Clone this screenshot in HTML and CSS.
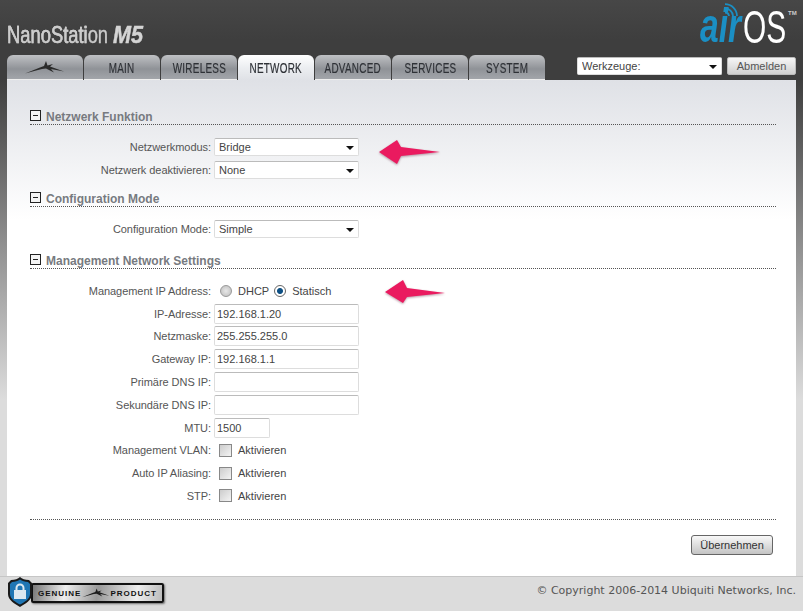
FILE: index.html
```html
<!DOCTYPE html>
<html lang="de">
<head>
<meta charset="utf-8">
<title>NanoStation M5</title>
<link rel="stylesheet" href="styles.css">
</head>
<body>
<div class="page">
  <header class="top">
    <div class="product"><span class="product-name">NanoStation</span><span class="product-model">M5</span></div>
    <div class="logo">
      <svg class="wifi" width="14" height="14" viewBox="0 0 14 14"><g fill="none" stroke="#1b8fc4" stroke-width="1.800"><path d="M1 1.200A12 12 0 0 1 13 13"/><path d="M1 5.500A8 8 0 0 1 9 13"/><path d="M1 9.500A4 4 0 0 1 5 13"/></g></svg>
      <span class="logo-air">air</span><span class="logo-os">OS</span><span class="logo-tm">TM</span>
    </div>
  </header>
  <div class="navbar">
    <nav class="tabs">
      <a class="tab tab-logo"><svg width="40" height="13" viewBox="0 0 40 13"><path fill="#2b2b2b" d="M0 12.500 L15 6.500 L19 5 L21 0 L22.500 4.500 L28 3 L25 5.500 L39 10.500 L26 8 L29 11.500 L21 7.500 L17 8 L13 9 Z"/></svg></a>
      <a class="tab"><span>MAIN</span></a>
      <a class="tab"><span>WIRELESS</span></a>
      <a class="tab tab-active"><span>NETWORK</span></a>
      <a class="tab"><span>ADVANCED</span></a>
      <a class="tab"><span>SERVICES</span></a>
      <a class="tab"><span>SYSTEM</span></a>
    </nav>
    <div class="tools">
      <div class="select"><select><option>Werkzeuge:</option></select></div>
      <button class="btn btn-logout" type="button">Abmelden</button>
    </div>
  </div>
  <main class="content">
    <section class="group group-first">
      <h2 class="group-title"><span class="toggle"></span>Netzwerk Funktion</h2>
      <div class="row"><label class="lbl">Netzwerkmodus:</label><div class="select"><select><option>Bridge</option></select></div></div>
      <div class="row"><label class="lbl">Netzwerk deaktivieren:</label><div class="select"><select><option>None</option></select></div></div>
    </section>
    <section class="group">
      <h2 class="group-title"><span class="toggle"></span>Configuration Mode</h2>
      <div class="row"><label class="lbl">Configuration Mode:</label><div class="select"><select><option>Simple</option></select></div></div>
    </section>
    <section class="group group-last">
      <h2 class="group-title"><span class="toggle"></span>Management Network Settings</h2>
      <div class="row row-radio"><label class="lbl">Management IP Address:</label>
        <label class="opt"><input type="radio" name="ip">DHCP</label>
        <label class="opt"><input type="radio" name="ip" checked>Statisch</label>
      </div>
      <div class="row"><label class="lbl">IP-Adresse:</label><input class="text" type="text" value="192.168.1.20"></div>
      <div class="row"><label class="lbl">Netzmaske:</label><input class="text" type="text" value="255.255.255.0"></div>
      <div class="row"><label class="lbl">Gateway IP:</label><input class="text" type="text" value="192.168.1.1"></div>
      <div class="row"><label class="lbl">Primäre DNS IP:</label><input class="text" type="text"></div>
      <div class="row"><label class="lbl">Sekundäre DNS IP:</label><input class="text" type="text"></div>
      <div class="row"><label class="lbl">MTU:</label><input class="text text-short" type="text" value="1500"></div>
      <div class="row"><label class="lbl">Management VLAN:</label><label class="opt opt-check"><input type="checkbox">Aktivieren</label></div>
      <div class="row"><label class="lbl">Auto IP Aliasing:</label><label class="opt opt-check"><input type="checkbox">Aktivieren</label></div>
      <div class="row"><label class="lbl">STP:</label><label class="opt opt-check"><input type="checkbox">Aktivieren</label></div>
    </section>
    <div class="actions"><button class="btn btn-apply" type="button">Übernehmen</button></div>
    <svg class="arrow arrow-one" width="66" height="28" viewBox="0 0 66 28"><path d="M1 13 L19 1 L23 8 L62 13 L23 17 L19 25 Z"/></svg>
    <svg class="arrow arrow-two" width="66" height="28" viewBox="0 0 66 28"><path d="M1 13 L19 1 L23 9 L61 14 L23 18 L19 24 Z"/></svg>
  </main>
  <footer class="foot">
    <div class="badge">
      <svg class="shield" width="26" height="30" viewBox="0 0 26 30"><path fill="#1a1a1a" d="M13 0 C15 2 18 3 22 3 L25 6 L25 17 C25 23 18 27 13 30 C8 27 1 23 1 17 L1 6 L4 3 C8 3 11 2 13 0 Z"/><path fill="#1f76b4" d="M13 2.500 C15 4 18 5 21 5 L23 7 L23 17 C23 22 17 25.500 13 27.500 C9 25.500 3 22 3 17 L3 7 L5 5 C8 5 11 4 13 2.500 Z"/><path fill="none" stroke="#dce8f0" stroke-width="2" d="M9.500 13 V11 a3.500 3.500 0 0 1 7 0 V13"/><rect x="7" y="13" width="12" height="9" fill="#dce8f0"/></svg>
      <div class="badge-bar"><span>GENUINE</span><svg width="28" height="10" viewBox="0 0 40 13"><path fill="#1c1c1c" d="M0 12.500 L15 6.500 L19 5 L21 0 L22.500 4.500 L28 3 L25 5.500 L39 10.500 L26 8 L29 11.500 L21 7.500 L17 8 L13 9 Z"/></svg><span>PRODUCT</span></div>
    </div>
    <div class="copy">© Copyright 2006-2014 Ubiquiti Networks, Inc.</div>
  </footer>
</div>
</body>
</html>
```

FILE: styles.css
```css
* { box-sizing: border-box; }
html, body { margin: 0; height: 100%; }
body {
  width: 803px;
  height: 611px;
  overflow: hidden;
  font-family: "Liberation Sans", Arial, sans-serif;
  font-size: 11px;
  color: #444;
  background: linear-gradient(180deg, #474747 0, #3e3e3e 40px, #3e3e3e 80px, #dcdcdc 400px);
}
.page { display: flex; flex-direction: column; height: 611px; }

.top {
  height: 55px;
  padding: 0 7px;
  display: flex;
  justify-content: space-between;
}
.product {
  display: flex;
  margin-top: 22px;
  height: 26px;
  font-size: 24px;
  line-height: 26px;
  white-space: nowrap;
}
.product-name {
  width: 106px;
  transform: scaleX(.765);
  transform-origin: 0 50%;
  -webkit-text-stroke: .4px #c8c8c8;
  background: linear-gradient(180deg, #eee 20%, #999 85%);
  -webkit-background-clip: text;
  background-clip: text;
  color: #ccc;
}
.product-model {
  transform: scaleX(.9);
  transform-origin: 0 50%;
  font-weight: bold;
  font-style: italic;
  -webkit-text-stroke: .5px #d4d4d4;
  color: #d4d4d4;
}
.logo { position: relative; width: 96px; height: 50px; white-space: nowrap; }
.wifi { position: absolute; left: 24px; top: 3px; }
.logo-air {
  position: absolute; left: 0; top: 2px;
  transform: scaleX(.7);
  transform-origin: 0 50%;
  font-style: italic; font-weight: bold; font-size: 48px; line-height: 48px;
  color: #1b8fc4;
}
.logo-os {
  position: absolute; left: 43px; top: 4px;
  transform: scaleX(.65);
  transform-origin: 0 50%;
  font-size: 46px; line-height: 46px; color: #fff;
}
.logo-tm { position: absolute; left: 88px; top: 10px; font-size: 6px; font-weight: bold; color: #ccc; }

.navbar {
  height: 25px;
  padding: 0 7px;
  display: flex;
  justify-content: space-between;
}
.tabs { display: flex; gap: 1px; }
.tab {
  width: 76px;
  height: 25px;
  display: flex;
  align-items: center;
  justify-content: center;
  border-radius: 6px 6px 0 0;
  font-size: 15px;
  letter-spacing: .4px;
  color: #2e3136;
  background: linear-gradient(180deg, #bfc1c4 0, #8f9297 58%, #a2a5aa 100%);
  border-bottom: 1px solid #eee;
}
.tab span { display: inline-block; transform: scaleX(.66); -webkit-text-stroke: .2px #2e3136; white-space: nowrap; }
.tab-active {
  background: linear-gradient(180deg, #fff 0, #eceef1 50%, #dfe1e6 100%);
  border-bottom: 0;
}
.tools { display: flex; gap: 5px; padding-top: 2px; }
.btn {
  font-family: "Liberation Sans", Arial, sans-serif;
  font-size: 11px;
  color: #333;
  border-radius: 2px;
  padding: 0;
}
.btn-logout {
  width: 69px; height: 18px;
  border: 1px solid #bbb;
  background: linear-gradient(180deg, #f6f6f6, #cfcfcf);
  color: #555;
}
.select { position: relative; width: 145px; height: 18px; }
.select::after {
  content: "";
  position: absolute;
  right: 5px; top: 8px;
  border: 4px solid transparent;
  border-top: 4px solid #111;
  border-bottom: 0;
  pointer-events: none;
}
.select select {
  appearance: none;
  display: block;
  width: 100%; height: 100%;
  border: 1px solid #ddd;
  border-top-color: #bbb;
  border-radius: 2px;
  background: #fff;
  padding: 0 4px;
  font-family: "Liberation Sans", Arial, sans-serif;
  font-size: 11px;
  color: #444;
}

.content {
  position: relative;
  width: 789px;
  height: 496px;
  margin-left: 7px;
  padding: 28px 20px 0 23px;
  background: linear-gradient(180deg, #dfe1e6 0, #fff 140px);
}
.group { margin-top: 10px; }
.group-first { margin-top: 0; }
.group-last { margin-top: 13px; }
.group-title {
  display: flex;
  align-items: flex-end;
  gap: 5px;
  margin: 0 0 12px;
  height: 17px;
  border-bottom: 1px dotted #555;
  font-size: 12px;
  line-height: 14px;
  font-weight: bold;
  color: #777a80;
}
.toggle {
  position: relative;
  width: 11px; height: 11px;
  margin-bottom: 3px;
  border: 1px solid #222;
  background: #f4f4f4;
}
.toggle::after {
  content: "";
  position: absolute;
  left: 2px; right: 2px; top: 4px;
  height: 1px;
  background: #222;
}
.row {
  display: flex;
  align-items: center;
  height: 20px;
  margin-bottom: 2.800px;
}
.lbl { width: 181px; text-align: right; margin-right: 3px; color: #555; flex: none; letter-spacing: -.05px; }
.text {
  width: 145px; height: 20px;
  border: 1px solid #ddd;
  border-top-color: #bbb;
  border-radius: 2px;
  background: #fff;
  padding: 0 2px;
  font-family: "Liberation Sans", Arial, sans-serif;
  font-size: 11px;
  color: #444;
}
.text-short { width: 56px; }
.opt { display: flex; align-items: center; color: #444; }
.opt input { appearance: none; margin: 0; flex: none; }
.row-radio .opt input {
  width: 12px; height: 12px;
  margin: 1px 6px 0 6px;
  border-radius: 50%;
  border: 1px solid #999;
  background: radial-gradient(circle, #e8e8e8, #bcbcbc);
}
.row-radio .opt input:checked {
  background: radial-gradient(circle, #0d4f83 0, #0d4f83 2.500px, #fff 3.500px);
  border-color: #666;
}
.row-radio .opt + .opt input { margin-left: 5px; }
.opt-check input {
  width: 13px; height: 13px;
  margin: 0 6px 0 5px;
  border: 1px solid #888;
  background: linear-gradient(135deg, #ccc, #f4f4f4);
}
.actions {
  margin-top: 13px;
  border-top: 1px dotted #555;
  padding: 15px 3px 0 0;
  display: flex;
  justify-content: flex-end;
}
.btn-apply {
  width: 82px; height: 20px;
  border: 1px solid #666;
  border-radius: 3px;
  background: linear-gradient(180deg, #f8f8f8, #c4c4c4);
}
.arrow { position: absolute; filter: drop-shadow(0 1px 1px rgba(80,0,30,.4)); }
.arrow path { fill: #ea1a5f; }
.arrow-one { left: 371px; top: 59px; }
.arrow-two { left: 377px; top: 199px; }

.foot {
  flex: 1;
  display: flex;
  justify-content: space-between;
  background: #dcdcdc;
  border-top: 1px solid #c6c6c6;
  padding: 0 7px;
}
.badge { display: flex; align-items: flex-start; }
.shield { flex: none; position: relative; z-index: 1; }
.badge-bar {
  margin: 6px 0 0 -2px;
  width: 133px; height: 20px;
  display: flex;
  align-items: center;
  justify-content: space-between;
  padding: 0 5px;
  border: 2px solid #111;
  border-radius: 2px;
  background: linear-gradient(100deg, #777 0, #eee 25%, #999 50%, #eee 80%, #bbb 100%);
  box-shadow: 1px 1px 2px rgba(0,0,0,.5);
  font-size: 8px;
  font-weight: bold;
  letter-spacing: 1px;
  color: #111;
}
.copy {
  margin-top: 7px;
  font-family: "DejaVu Sans", Verdana, sans-serif;
  font-size: 11px;
  color: #555;
}
```
